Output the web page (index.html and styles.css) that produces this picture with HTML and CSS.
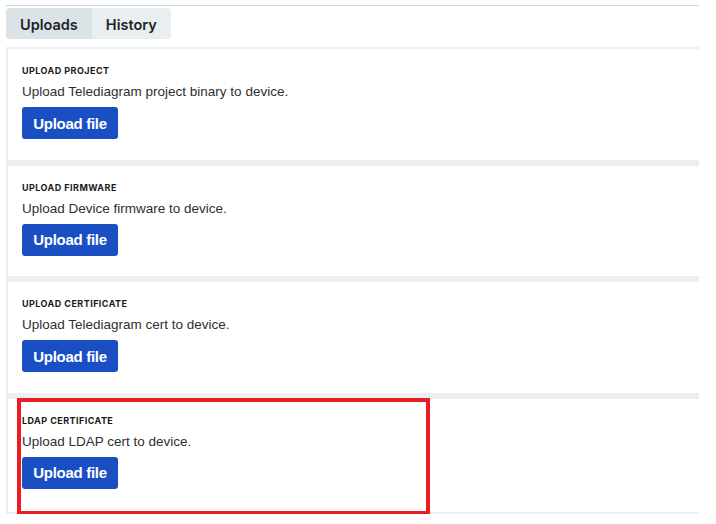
FILE: index.html
```html
<!DOCTYPE html>
<html>
<head>
<meta charset="utf-8">
<link rel="stylesheet" href="styles.css">
</head>
<body>
<div class="page">
  <div class="rule"></div>
  <div class="tabs">
    <div class="tab active">Uploads</div>
    <div class="tab">History</div>
  </div>
  <div class="list">
    <section class="card">
      <div class="label">UPLOAD PROJECT</div>
      <div class="desc">Upload Telediagram project binary to device.</div>
      <button class="btn">Upload file</button>
    </section>
    <section class="card">
      <div class="label">UPLOAD FIRMWARE</div>
      <div class="desc">Upload Device firmware to device.</div>
      <button class="btn">Upload file</button>
    </section>
    <section class="card">
      <div class="label">UPLOAD CERTIFICATE</div>
      <div class="desc">Upload Telediagram cert to device.</div>
      <button class="btn">Upload file</button>
    </section>
    <section class="card last">
      <div class="label">LDAP CERTIFICATE</div>
      <div class="desc">Upload LDAP cert to device.</div>
      <button class="btn">Upload file</button>
    </section>
  </div>
  <div class="highlight"></div>
</div>
</body>
</html>
```

FILE: styles.css
```css
html, body {
  margin: 0;
  padding: 0;
  background: #ffffff;
}
body {
  font-family: Inter, "Liberation Sans", sans-serif;
  color: #222;
}
.page {
  position: relative;
  width: 693px;
  padding-left: 6px;
  padding-top: 5px;
}
.rule {
  border-top: 1px solid #cfd5dc;
}
.tabs {
  display: inline-flex;
  margin-top: 2px;
  background: #e9eef0;
  border-radius: 4px;
  overflow: hidden;
}
.tab {
  height: 31px;
  box-sizing: border-box;
  padding: 2px 14px 0;
  line-height: 29px;
  font-size: 14.5px;
  font-weight: 600;
  color: #1f2328;
}
.tab.active {
  background: #dce3e7;
}
.list {
  margin-top: 8px;
  background: #ebeff0;
  padding: 2px 0 2px 2px;
  display: flex;
  flex-direction: column;
  gap: 6px;
}
.card {
  background: #ffffff;
  height: 110.67px;
  box-sizing: border-box;
  padding: 16px 0 0 14px;
}
.card.last {
  height: 113px;
}
.label {
  font-size: 9px;
  line-height: 12px;
  font-weight: 700;
  letter-spacing: 0.45px;
  color: #1a1a1a;
}
.desc {
  margin-top: 6px;
  font-family: "Liberation Sans", Arial, sans-serif;
  font-size: 13.5px;
  line-height: 18px;
  color: #2f2f2f;
}
.btn {
  display: block;
  margin-top: 6px;
  width: 96px;
  height: 32px;
  border: none;
  border-radius: 3px;
  background: #1a4fc4;
  color: #ffffff;
  font-family: "Liberation Sans", Arial, sans-serif;
  font-weight: 700;
  font-size: 15px;
  letter-spacing: -0.3px;
  padding: 0;
}
.highlight {
  position: absolute;
  left: 17px;
  top: 398px;
  width: 413px;
  height: 117px;
  box-sizing: border-box;
  border: 4px solid #ec1c24;
}
```
